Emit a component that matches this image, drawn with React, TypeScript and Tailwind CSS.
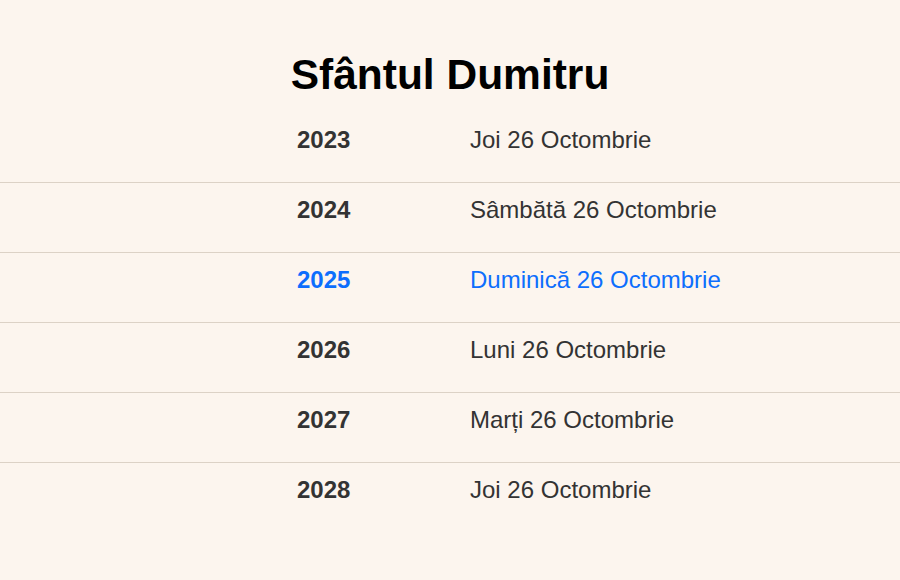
const rows = [
  { year: '2023', date: 'Joi 26 Octombrie' },
  { year: '2024', date: 'Sâmbătă 26 Octombrie' },
  { year: '2025', date: 'Duminică 26 Octombrie', current: true },
  { year: '2026', date: 'Luni 26 Octombrie' },
  { year: '2027', date: 'Marți 26 Octombrie' },
  { year: '2028', date: 'Joi 26 Octombrie' },
];

export default function App() {
  return (
    <div className="min-h-[580px] bg-[#fcf5ee] pt-[51px] font-['Liberation_Sans',Arial,sans-serif]">
      <h1 className="text-center text-[42.5px] font-bold leading-[48px] text-black">Sfântul Dumitru</h1>
      <div className="mt-[14px]">
        {rows.map((r, i) => (
          <div
            key={r.year}
            className={`flex pl-[297px] pt-[13px] pb-[28px] text-[24px] leading-[28px] ${
              i < rows.length - 1 ? 'border-b border-[#dcd2c6]' : ''
            } ${r.current ? 'text-[#0d6efd]' : 'text-[#333333]'}`}
          >
            <span className="w-[173px] font-bold">{r.year}</span>
            <span>{r.date}</span>
          </div>
        ))}
      </div>
    </div>
  );
}
